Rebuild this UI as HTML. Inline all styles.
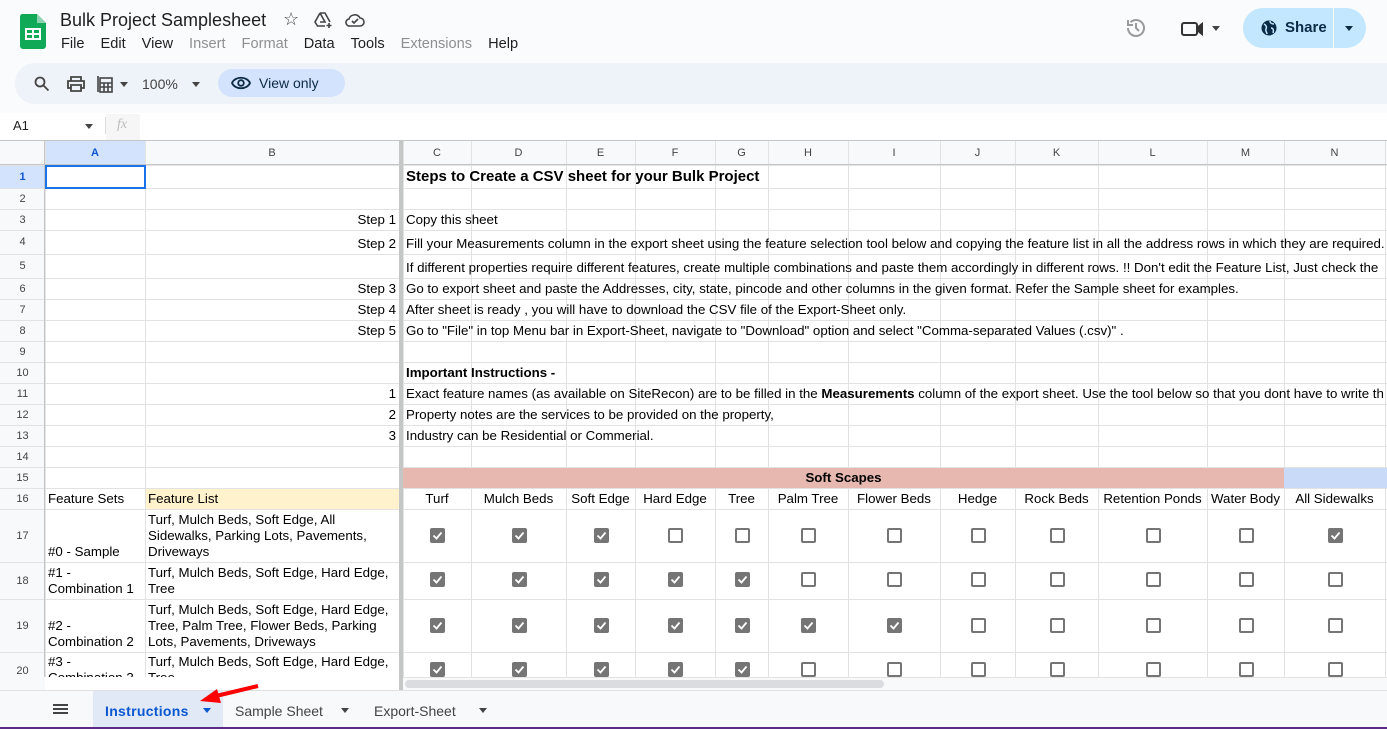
<!DOCTYPE html>
<html><head><meta charset="utf-8">
<style>
*{box-sizing:border-box;margin:0;padding:0}
body{width:1387px;height:729px;overflow:hidden;background:#fff;font-family:"Liberation Sans",Arial,sans-serif;position:relative}
.a{position:absolute}
.top{left:0;top:0;width:1387px;height:113px;background:#f9fbfd}
.menu span{margin-right:16px;font-size:14.6px;color:#1f1f1f}
.menu .g{color:#8f8f8f}
.tb{left:15px;top:63px;width:1372px;height:41px;background:#eef2f9;border-radius:20px 0 0 20px}
.cell{position:absolute;font-size:13.3px;color:#000;display:flex;align-items:flex-end;padding:0 3px 2px 3px;white-space:nowrap;overflow:visible;line-height:16px}
.hl{position:absolute;background:#e2e2e2}
.hd{position:absolute;font-size:11px;color:#444;display:flex;align-items:center;justify-content:center}
.cb{position:absolute;width:15px;height:15px;border-radius:2px}
.on{background:#757575}
.off{border:2px solid #757575;background:#fff}
.on svg{position:absolute;left:1px;top:1px}
</style></head><body>
<div class="a top"></div>
<svg class="a" style="left:20px;top:14px" width="26" height="35" viewBox="0 0 26 35"><path d="M2 0h15l9 9v23a3 3 0 0 1-3 3H3a3 3 0 0 1-3-3V3a3 3 0 0 1 2-3z" fill="#0fa958"/><path d="M17 0v9h9z" fill="#8ed1b1"/><rect x="5" y="14" width="16" height="12" fill="#fff"/><rect x="7" y="16" width="5" height="3" fill="#0fa958"/><rect x="14" y="16" width="5" height="3" fill="#0fa958"/><rect x="7" y="21" width="5" height="3" fill="#0fa958"/><rect x="14" y="21" width="5" height="3" fill="#0fa958"/></svg>
<div class="a" style="left:60px;top:10px;font-size:18px;color:#1f1f1f">Bulk Project Samplesheet</div>
<div class="a" style="left:283px;top:9px;font-size:18px;color:#444">☆</div>
<svg class="a" style="left:314px;top:11px" width="20" height="18" viewBox="0 0 20 18" fill="none" stroke="#444" stroke-width="1.6"><path d="M6 2h5l5 9M6 2L1 11l2.5 4H11M6 2l5 9H6"/><path d="M15 12v5M12.5 14.5h5"/></svg>
<svg class="a" style="left:345px;top:13px" width="20" height="14" viewBox="0 0 20 14" fill="none" stroke="#444" stroke-width="1.6"><path d="M5 13h10a4 4 0 0 0 0-8 6 6 0 0 0-11 1 3.5 3.5 0 0 0 1 7z"/><path d="M7 8l2 2 4-4"/></svg>
<div class="a menu" style="left:61px;top:35px"><span>File</span><span>Edit</span><span>View</span><span class="g">Insert</span><span class="g">Format</span><span>Data</span><span>Tools</span><span class="g">Extensions</span><span>Help</span></div>
<svg class="a" style="left:1125px;top:17px" width="22" height="22" viewBox="0 0 22 22" fill="none" stroke="#9a9a9a" stroke-width="2"><path d="M3 11a8 8 0 1 0 2.5-5.8M3 3v5h5"/><path d="M11 6v5l3 3"/></svg>
<svg class="a" style="left:1181px;top:20px" width="24" height="18" viewBox="0 0 24 18" fill="none" stroke="#333" stroke-width="2"><rect x="1" y="3" width="15" height="12" rx="2"/><path d="M16 8l5-4v10l-5-4z" fill="#333"/></svg>
<div class="a" style="left:1212px;top:26px;border:4px solid transparent;border-top:5px solid #444"></div>
<div class="a" style="left:1243px;top:8px;width:123px;height:40px;background:#c2e7ff;border-radius:20px"></div>
<div class="a" style="left:1333px;top:8px;width:1px;height:40px;background:#fff"></div>
<svg class="a" style="left:1261px;top:20px" width="16" height="16" viewBox="0 0 16 16"><circle cx="8" cy="8" r="7.5" fill="#0b2a45"/><path d="M3 4c2 1 3 3 2 5s1 3 1 5M9 1c0 2 2 3 4 3M10 8c2 0 3 2 2 5" stroke="#c2e7ff" stroke-width="1.5" fill="none"/></svg>
<div class="a" style="left:1285px;top:19px;font-size:15px;color:#0b2a45;font-weight:bold">Share</div>
<div class="a" style="left:1345px;top:26px;border:4px solid transparent;border-top:5px solid #0b2a45"></div>
<div class="a tb"></div>
<svg class="a" style="left:34px;top:76px" width="16" height="16" viewBox="0 0 16 16" fill="none" stroke="#444" stroke-width="1.8"><circle cx="6" cy="6" r="4.5"/><path d="M9.5 9.5l5 5"/></svg>
<svg class="a" style="left:67px;top:76px" width="18" height="16" viewBox="0 0 18 16" fill="none" stroke="#444" stroke-width="1.8"><path d="M4 5V1h10v4M4 12H1V5h16v7h-3M4 9h10v6H4z"/></svg>
<svg class="a" style="left:97px;top:75px" width="16" height="18" viewBox="0 0 16 18" fill="none" stroke="#444" stroke-width="1.6"><rect x="3" y="3" width="12" height="14"/><path d="M1 1v16M3 8h12M3 12h12M7 8v9M11 8v9"/></svg>
<div class="a" style="left:120px;top:82px;border:4px solid transparent;border-top:5px solid #444"></div>
<div class="a" style="left:142px;top:76px;font-size:14px;color:#444">100%</div>
<div class="a" style="left:192px;top:82px;border:4px solid transparent;border-top:5px solid #444"></div>
<div class="a" style="left:218px;top:69px;width:127px;height:28px;background:#d3e3fd;border-radius:14px"></div>
<svg class="a" style="left:231px;top:76px" width="20" height="14" viewBox="0 0 20 14" fill="none" stroke="#0b2a45" stroke-width="1.8"><path d="M1 7c3-7 15-7 18 0-3 7-15 7-18 0z"/><circle cx="10" cy="7" r="2.8"/></svg>
<div class="a" style="left:259px;top:75px;font-size:14px;color:#0b2a45">View only</div>
<div class="a" style="left:13px;top:118px;font-size:13px;color:#1f1f1f">A1</div>
<div class="a" style="left:85px;top:124px;border:4px solid transparent;border-top:5px solid #444"></div>
<div class="a" style="left:105px;top:117px;width:1px;height:17px;background:#ddd"></div>
<div class="a" style="left:106px;top:114px;width:34px;height:26px;background:#f6f6f6"></div>
<div class="a" style="left:117px;top:117px;font-size:14px;color:#bbb;font-style:italic;font-family:'Liberation Serif',serif">fx</div>
<div class="a" style="left:0;top:140px;width:1387px;height:1px;background:#c4c7c5"></div>
<div id="grid"></div>
<div class="a" style="left:0;top:690px;width:1387px;height:39px;background:#f8f9fa;border-top:1px solid #e0e0e0"></div>
<div class="a" style="left:53px;top:704px;width:15px;height:2px;background:#444;box-shadow:0 4px 0 #444,0 8px 0 #444"></div>
<div class="a" style="left:93px;top:691px;width:130px;height:38px;background:#e1e9f7"></div>
<div class="a" style="left:105px;top:703px;font-size:14px;color:#0b57d0;font-weight:bold;letter-spacing:.3px">Instructions</div>
<div class="a" style="left:203px;top:708px;border:4px solid transparent;border-top:5px solid #0b57d0"></div>
<div class="a" style="left:235px;top:703px;font-size:14px;color:#444">Sample Sheet</div>
<div class="a" style="left:341px;top:708px;border:4px solid transparent;border-top:5px solid #444"></div>
<div class="a" style="left:374px;top:703px;font-size:14px;color:#444">Export-Sheet</div>
<div class="a" style="left:479px;top:708px;border:4px solid transparent;border-top:5px solid #444"></div>
<svg class="a" style="left:198px;top:682px" width="66" height="24" viewBox="0 0 66 24"><path d="M60 4L18 14" stroke="#f00" stroke-width="4"/><path d="M2 19l17-12 4 14z" fill="#f00"/></svg>
<div class="a" style="left:0;top:727px;width:1387px;height:2px;background:#5b2a86"></div>
<script>
const X=[45,145,399,403,471,566,635,715,768,848,940,1015,1098,1207,1284,1385];
const cols=[[45,145,'A'],[145,399,'B'],[403,471,'C'],[471,566,'D'],[566,635,'E'],[635,715,'F'],[715,768,'G'],[768,848,'H'],[848,940,'I'],[940,1015,'J'],[1015,1098,'K'],[1098,1207,'L'],[1207,1284,'M'],[1284,1385,'N']];
const R=[165,188,209,230,254,278,299,320,341,362,383,404,425,446,467,488,509,562,599,652,690];
let h='';
const T=141;
h+=`<div class="a" style="left:0;top:${T}px;width:1387px;height:24px;background:#f8f9fa"></div>`;
h+=`<div class="a" style="left:0;top:${T}px;width:45px;height:549px;background:#f8f9fa"></div>`;
h+=`<div class="a" style="left:45px;top:${T}px;width:100px;height:24px;background:#d3e3fd"></div>`;
h+=`<div class="a" style="left:0;top:165px;width:45px;height:23px;background:#d3e3fd"></div>`;
for(const y of R) h+=`<div class="hl" style="left:0;top:${y}px;width:1387px;height:1px"></div>`;
for(const x of X) h+=`<div class="hl" style="left:${x}px;top:${T}px;width:1px;height:549px"></div>`;
h+=`<div class="a" style="left:403px;top:468px;width:881px;height:20px;background:#e6b8af"></div>`;
h+=`<div class="a" style="left:1284px;top:468px;width:103px;height:20px;background:#c9daf8"></div>`;
h+=`<div class="a" style="left:146px;top:489px;width:253px;height:20px;background:#fff2cc"></div>`;
h+=`<div class="a" style="left:0;top:164px;width:1387px;height:1px;background:#c4c7c5"></div>`;
h+=`<div class="a" style="left:44px;top:${T}px;width:1px;height:549px;background:#c4c7c5"></div>`;
h+=`<div class="a" style="left:399px;top:${T}px;width:4px;height:549px;background:#c4c7c5"></div>`;
for(const [a,b,l] of cols) h+=`<div class="hd" style="left:${a}px;top:${T}px;width:${b-a}px;height:24px;${l=='A'?'color:#0b57d0;font-weight:bold':''}">${l}</div>`;
for(let i=0;i<20;i++) h+=`<div class="hd" style="left:0;top:${R[i]}px;width:45px;height:${R[i+1]-R[i]}px;${i==0?'color:#0b57d0;font-weight:bold':''}">${i+1}</div>`;
h+=`<div class="a" style="left:45px;top:165px;width:101px;height:24px;border:2px solid #1a73e8"></div>`;
function cell(r,x,w,txt,st){const top=R[r-1],ht=R[r]-top;h+=`<div class="cell" style="left:${x}px;top:${top}px;width:${w}px;height:${ht}px;${st||''}"><span>${txt}</span></div>`;}
cell(1,403,800,'Steps to Create a CSV sheet for your Bulk Project','font-weight:bold;font-size:15px;padding-bottom:3px');
const steps={3:['Step 1','Copy this sheet'],4:['Step 2','Fill your Measurements column in the export sheet using the feature selection tool below and copying the feature list in all the address rows in which they are required.'],5:['','If different properties require different features, create multiple combinations and paste them accordingly in different rows. !! Don\'t edit the Feature List, Just check the'],6:['Step 3','Go to export sheet and paste the Addresses, city, state, pincode and other columns in the given format. Refer the Sample sheet for examples.'],7:['Step 4','After sheet is ready , you will have to download the CSV file of the Export-Sheet only.'],8:['Step 5','Go to "File" in top Menu bar in Export-Sheet, navigate to "Download" option and select "Comma-separated Values (.csv)" .'],11:['1','Exact feature names (as available on SiteRecon) are to be filled in the <b>Measurements</b> column of the export sheet. Use the tool below so that you dont have to write th'],12:['2','Property notes are the services to be provided on the property,'],13:['3','Industry can be Residential or Commerial.']};
for(const k in steps){cell(+k,145,254,steps[k][0],'justify-content:flex-end');cell(+k,403,984,steps[k][1],'overflow:hidden');}
cell(10,403,400,'Important Instructions -','font-weight:bold');
cell(15,403,881,'Soft Scapes','justify-content:center;font-weight:bold');
cell(16,45,100,'Feature Sets');cell(16,145,254,'Feature List');
const names=['Turf','Mulch Beds','Soft Edge','Hard Edge','Tree','Palm Tree','Flower Beds','Hedge','Rock Beds','Retention Ponds','Water Body','All Sidewalks'];
names.forEach((n,i)=>{const [a,b]=cols[i+2];cell(16,a,b-a,n,'justify-content:center;padding:0 0 2px 0');});
const wrap='white-space:normal;line-height:16px';
cell(17,45,100,'#0 - Sample',wrap);cell(17,145,254,'Turf, Mulch Beds, Soft Edge, All Sidewalks, Parking Lots, Pavements, Driveways',wrap);
cell(18,45,100,'#1 - Combination 1',wrap);cell(18,145,254,'Turf, Mulch Beds, Soft Edge, Hard Edge, Tree',wrap);
cell(19,45,100,'#2 - Combination 2',wrap);cell(19,145,254,'Turf, Mulch Beds, Soft Edge, Hard Edge, Tree, Palm Tree, Flower Beds, Parking Lots, Pavements, Driveways',wrap);
h+=`<div class="cell" style="left:45px;top:654px;width:100px;height:36px;white-space:normal;align-items:flex-start;overflow:hidden">#3 - Combination 3</div>`;
h+=`<div class="cell" style="left:145px;top:654px;width:254px;height:36px;white-space:normal;align-items:flex-start;overflow:hidden">Turf, Mulch Beds, Soft Edge, Hard Edge, Tree</div>`;
const st=[[1,1,1,0,0,0,0,0,0,0,0,1],[1,1,1,1,1,0,0,0,0,0,0,0],[1,1,1,1,1,1,1,0,0,0,0,0],[1,1,1,1,1,0,0,0,0,0,0,0]];
const cy=[536,580,626,670];
const chk='<svg width="13" height="13" viewBox="0 0 13 13"><path d="M2.5 6.5l3 3 5-6" stroke="#fff" stroke-width="1.8" fill="none"/></svg>';
st.forEach((row,r)=>row.forEach((v,i)=>{const [a,b]=cols[i+2];const cx=Math.round((a+b)/2);
h+=`<div class="cb ${v?'on':'off'}" style="left:${cx-7}px;top:${cy[r]-8}px">${v?chk:''}</div>`;}));
h+=`<div class="a" style="left:403px;top:677px;width:984px;height:13px;background:#f8f9fa;border-top:1px solid #e2e2e2"></div>`;
h+=`<div class="a" style="left:405px;top:680px;width:479px;height:8px;background:#dadce0;border-radius:4px"></div>`;
h+=`<div class="a" style="left:0;top:677px;width:399px;height:13px;background:#fff"></div>`;
h+=`<div class="a" style="left:0;top:677px;width:45px;height:13px;background:#f8f9fa"></div>`;
document.getElementById('grid').innerHTML=h;
</script>
</body></html>
